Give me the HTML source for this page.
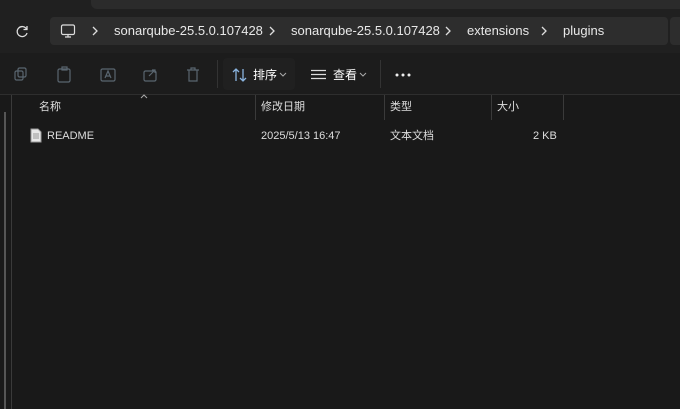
<!DOCTYPE html>
<html><head><meta charset="utf-8"><style>
body{margin:0;width:680px;height:409px;background:#191919;font-family:"Liberation Sans","Noto Sans CJK SC",sans-serif;color:#fff;position:relative;overflow:hidden;font-size:12px}
.a{position:absolute;line-height:14px}
</style></head><body>
<div class="a" style="left:0;top:0;width:680px;height:53px;background:#202020"></div>
<div class="a" style="left:91px;top:0;width:589px;height:9px;background:#2b2b2b;border-radius:0 0 0 6px"></div>
<div class="a" style="left:50px;top:17px;width:618px;height:28px;background:#2d2d2d;border-radius:4px"></div>
<div class="a" style="left:670px;top:17px;width:10px;height:28px;background:#2d2d2d;border-radius:4px 0 0 4px"></div>
<svg class="a" style="left:14px;top:24px" width="16" height="16" viewBox="0 0 16 16"><path d="M12.5 5A5 5 0 1 0 13 9" stroke="#ddd" fill="none" stroke-width="1.3"/><path d="M13 2v3.5H9.5" stroke="#ddd" fill="none" stroke-width="1.3"/></svg>
<svg class="a" style="left:60px;top:23px" width="16" height="16" viewBox="0 0 16 16"><rect x="1.5" y="2" width="13" height="9.5" rx="1.5" stroke="#ddd" fill="none" stroke-width="1.2"/><path d="M5 14h6M8 11.5v2.5" stroke="#ddd" stroke-width="1.2"/></svg>
<svg class="a" style="left:0;top:0" width="680" height="53"><g stroke="#ddd" stroke-width="1.3" fill="none"><path d="M93 27l4 4-4 4"/><path d="M270 27l4 4-4 4"/><path d="M446 27l4 4-4 4"/><path d="M542 27l4 4-4 4"/></g></svg>
<div class="a" style="top:24px;left:0;font-size:13px;color:#e8e8e8;white-space:nowrap">
<span class="a" style="left:114px">sonarqube-25.5.0.107428</span>
<span class="a" style="left:291px">sonarqube-25.5.0.107428</span>
<span class="a" style="left:467px">extensions</span>
<span class="a" style="left:563px">plugins</span></div>
<div class="a" style="left:0;top:53px;width:680px;height:42px;background:#1c1c1c"></div>
<div class="a" style="left:0;top:94px;width:680px;height:1px;background:#2e2e2e"></div>
<svg class="a" style="left:14px;top:66px" width="200" height="18" viewBox="0 0 200 18" stroke="#5a6670" fill="none" stroke-width="1.2">
<rect x="1" y="5" width="8" height="9" rx="1.5"/><rect x="4" y="2" width="8" height="9" rx="1.5"/>
<rect x="44" y="3" width="12" height="13" rx="1.5"/><rect x="48" y="1" width="5" height="3"/>
<rect x="87" y="3" width="14" height="12" rx="1.5"/><path d="M91 12l3-7 3 7M92 10h4"/>
<rect x="130" y="5" width="12" height="10" rx="1.5"/><path d="M135 10l6-6M138 4h3v3"/>
<path d="M173 4h12M175 4v11h8V4M177 4V2h4v2"/></svg>
<div class="a" style="left:217px;top:60px;width:1px;height:28px;background:#333"></div>
<div class="a" style="left:223px;top:58px;width:72px;height:32px;background:#202020;border-radius:4px"></div>
<svg class="a" style="left:231px;top:67px" width="18" height="16"><g stroke="#8ab4e0" stroke-width="1.3" fill="none"><path d="M5 14V2M2 5l3-3 3 3"/><path d="M12 2v12M9 11l3 3 3-3"/></g></svg>
<div class="a" style="left:253px;top:68px;font-size:12px">排序</div>
<svg class="a" style="left:279px;top:72px" width="8" height="6"><path d="M1 1l3 3 3-3" stroke="#aaa" fill="none"/></svg>
<svg class="a" style="left:311px;top:69px" width="15" height="12"><path d="M0 1.5h15M0 5.5h15M0 9.5h15" stroke="#ddd" stroke-width="1.3"/></svg>
<div class="a" style="left:333px;top:68px;font-size:12px">查看</div>
<svg class="a" style="left:359px;top:72px" width="8" height="6"><path d="M1 1l3 3 3-3" stroke="#aaa" fill="none"/></svg>
<div class="a" style="left:380px;top:60px;width:1px;height:28px;background:#333"></div>
<svg class="a" style="left:395px;top:73px" width="16" height="4"><circle cx="2" cy="2" r="1.5" fill="#eee"/><circle cx="8" cy="2" r="1.5" fill="#eee"/><circle cx="14" cy="2" r="1.5" fill="#eee"/></svg>
<div class="a" style="left:11px;top:95px;width:1px;height:314px;background:#3a3a3a"></div>
<div class="a" style="left:4px;top:112px;width:2px;height:297px;background:#555"></div>
<svg class="a" style="left:140px;top:94px" width="8" height="5"><path d="M1 4l3-3 3 3" stroke="#aaa" fill="none"/></svg>
<div class="a" style="left:255px;top:95px;width:1px;height:25px;background:#3a3a3a"></div>
<div class="a" style="left:384px;top:95px;width:1px;height:25px;background:#3a3a3a"></div>
<div class="a" style="left:491px;top:95px;width:1px;height:25px;background:#3a3a3a"></div>
<div class="a" style="left:563px;top:95px;width:1px;height:25px;background:#3a3a3a"></div>
<div class="a" style="top:100px;font-size:11px;color:#ddd;left:0;white-space:nowrap">
<span class="a" style="left:39px">名称</span><span class="a" style="left:261px">修改日期</span><span class="a" style="left:390px">类型</span><span class="a" style="left:497px">大小</span></div>
<svg class="a" style="left:30px;top:128px" width="12" height="15"><path d="M1 1h7l3 3v10H1z" fill="#e8e8e8" stroke="#999"/><path d="M3 6h6M3 8h6M3 10h6" stroke="#999"/></svg>
<div class="a" style="top:129px;font-size:11px;color:#ddd;left:0;white-space:nowrap">
<span class="a" style="left:47px">README</span><span class="a" style="left:261px">2025/5/13 16:47</span><span class="a" style="left:390px">文本文档</span><span class="a" style="left:533px">2 KB</span></div>
</body></html>
